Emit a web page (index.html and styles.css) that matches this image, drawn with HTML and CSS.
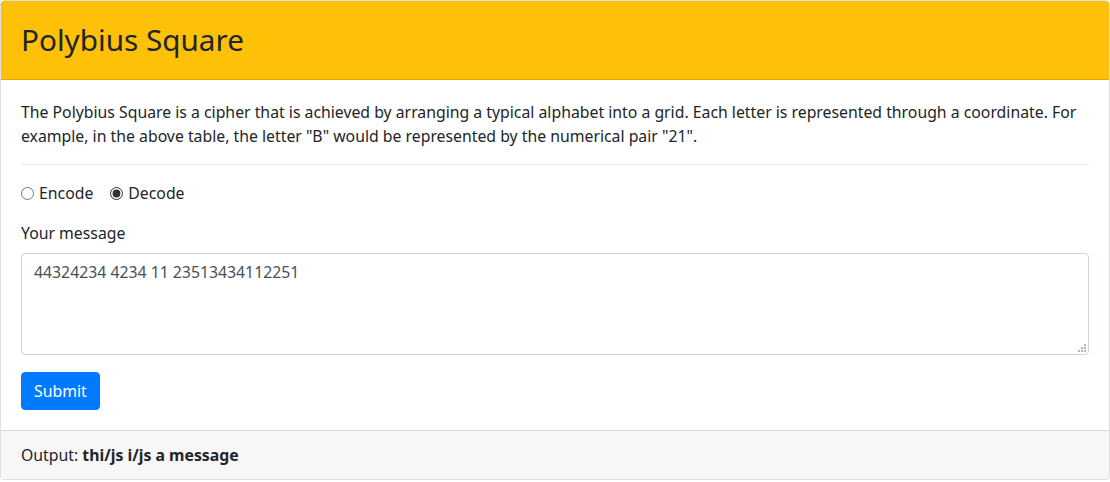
FILE: index.html
```html
<!DOCTYPE html>
<html lang="en">
<head>
<meta charset="utf-8">
<title>Polybius Square</title>
<link rel="stylesheet" href="styles.css">
</head>
<body>
<div class="card">
  <div class="card-header">
    <h1 class="title">Polybius Square</h1>
  </div>
  <div class="card-body">
    <p class="intro">The Polybius Square is a cipher that is achieved by arranging a typical alphabet into a grid. Each letter is represented through a coordinate. For example, in the above table, the letter "B" would be represented by the numerical pair "21".</p>
    <hr class="divider">
    <div class="modes">
      <label class="radio"><input type="radio" name="mode" value="encode"> Encode</label>
      <label class="radio"><input type="radio" name="mode" value="decode" checked> Decode</label>
    </div>
    <label class="field-label" for="msg">Your message</label>
    <div class="message-wrap">
      <textarea id="msg" class="message">44324234 4234 11 23513434112251</textarea>
      <svg class="grip" width="8" height="8" viewBox="0 0 8 8" aria-hidden="true">
        <rect x="6" y="0" width="2" height="2"/>
        <rect x="3" y="3" width="2" height="2"/>
        <rect x="6" y="3" width="2" height="2"/>
        <rect x="0" y="6" width="2" height="2"/>
        <rect x="3" y="6" width="2" height="2"/>
        <rect x="6" y="6" width="2" height="2"/>
      </svg>
    </div>
    <button class="btn" type="button">Submit</button>
  </div>
  <div class="card-footer">Output: <strong>thi/js i/js a message</strong></div>
</div>
</body>
</html>
```
FILE: styles.css
```css
* { box-sizing: border-box; }
html, body { margin: 0; padding: 0; background: #fff; }
body {
  font-family: "Noto Sans", "Open Sans", sans-serif;
  font-size: 15.8px;
  line-height: 24px;
  color: #212529;
}
.card {
  width: 1110px;
  border: 1px solid rgba(0,0,0,.125);
  border-radius: 4px;
  overflow: hidden;
}
.card-header {
  background: #ffc107;
  height: 79px;
  padding: 0 20px;
  display: flex;
  align-items: center;
  border-bottom: 1px solid rgba(0,0,0,.125);
}
.title {
  margin: 0;
  font-size: 29.7px;
  font-weight: 400;
  line-height: 36px;
  color: #212529;
}
.card-body { padding: 20px; }
.intro { margin: 0 0 16px; }
.divider {
  margin: 0 0 16px;
  border: 0;
  border-top: 1px solid rgba(0,0,0,.1);
}
.modes { display: flex; gap: 17px; margin-bottom: 16px; }
.radio { display: flex; align-items: center; gap: 5px; }
.radio input { margin: 0; width: 13px; height: 13px; accent-color: #333; }
.field-label { display: block; margin-bottom: 8px; }
.message-wrap { position: relative; margin: 0 0 17px; }
.message {
  display: block;
  width: 100%;
  height: 102px;
  padding: 6px 12px;
  font: inherit;
  color: #495057;
  border: 1px solid #ced4da;
  border-radius: 4px;
  margin: 0;
  resize: none;
}
.grip {
  position: absolute;
  right: 3px;
  bottom: 3px;
  fill: #b5b5b5;
}
.btn {
  display: block;
  font: inherit;
  color: #fff;
  background: #007bff;
  border: 1px solid #007bff;
  border-radius: 4px;
  padding: 6px 12px;
  height: 38px;
}
.card-footer {
  background: #f7f7f7;
  border-top: 1px solid rgba(0,0,0,.125);
  padding: 12px 20px;
}
.card-footer strong { font-weight: 700; }
```
